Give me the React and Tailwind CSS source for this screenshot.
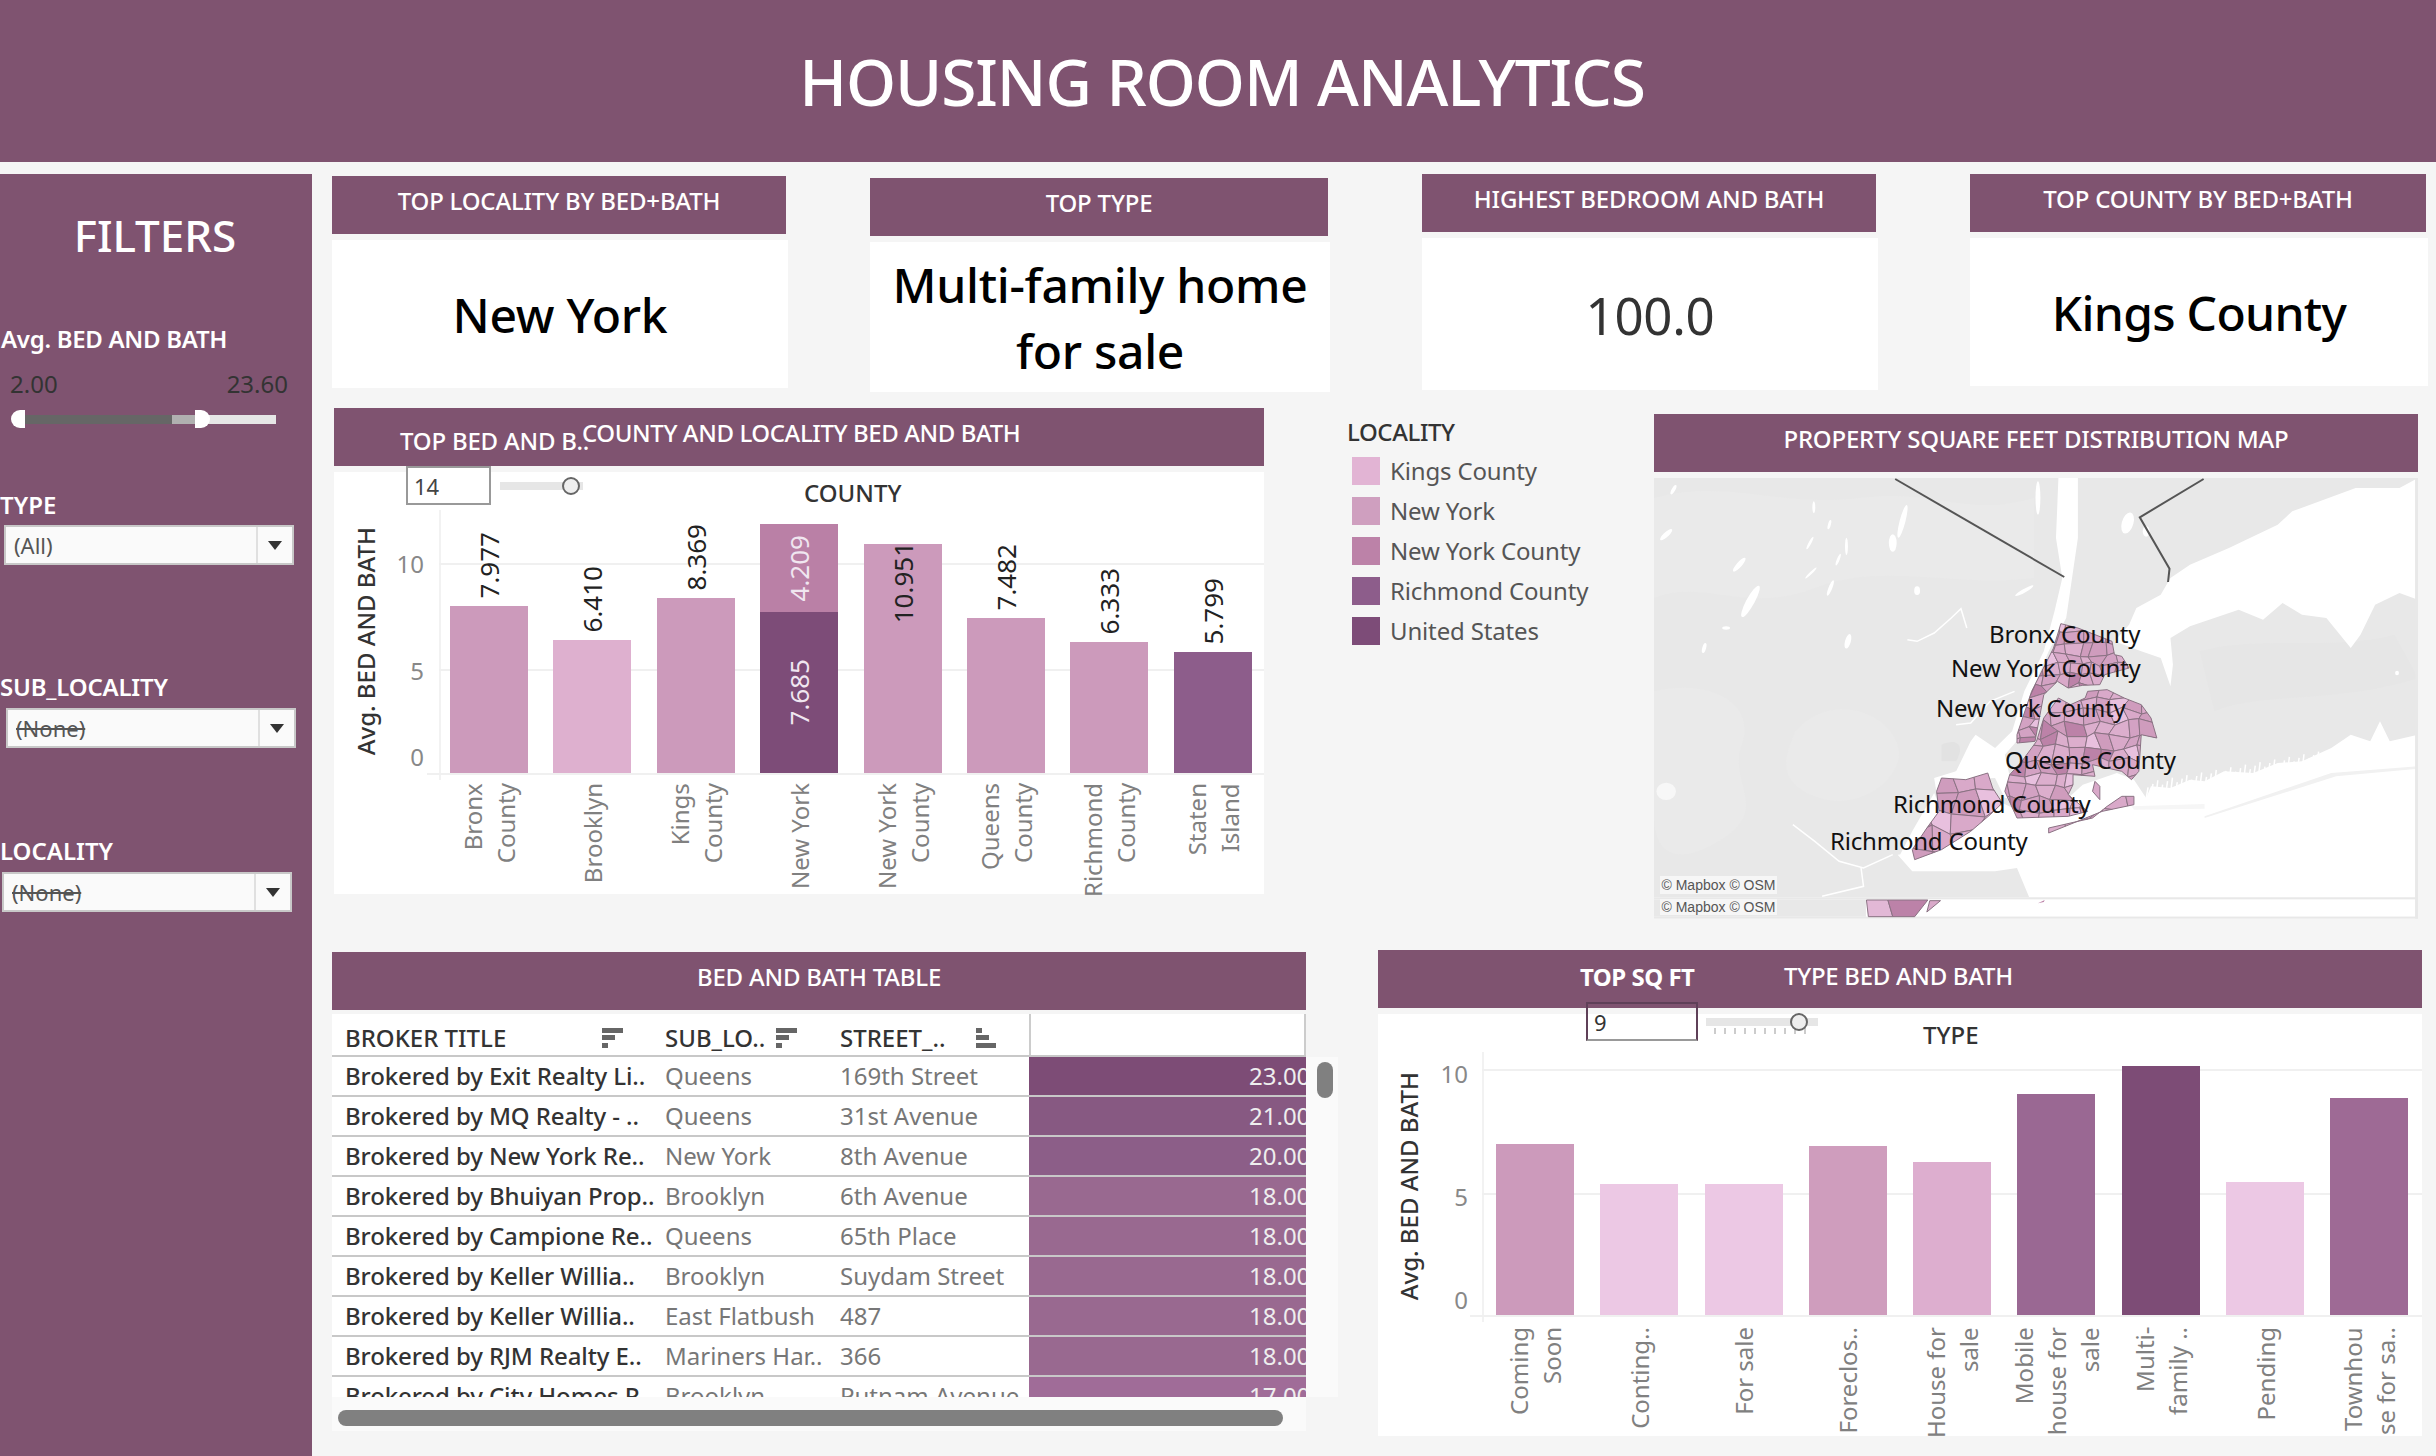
import React from "react";

const F = "font-['Noto_Sans',sans-serif]";

/* ---------- small pieces ---------- */
const Head = ({ children, className }) => (
  <div className={`bg-[#7f5370] text-white flex justify-center h-[58px] w-full text-[24px] leading-[50px] font-medium tracking-[-0.2px] ${className || ""}`}>{children}</div>
);

const Kpi = ({ wrap, head, bodyH, bodyW, children, color }) => (
  <div className={wrap}>
    <Head>{head}</Head>
    <div className={`bg-white flex items-center justify-center text-center text-[48px] leading-[66px] font-medium tracking-[-0.3px] pt-[2px] mt-[6px] ${bodyH} ${bodyW} ${color}`}>{children}</div>
  </div>
);

const Select = ({ wrap, value, strike }) => (
  <div className={`h-[40px] w-[290px] border-2 border-[#c8c8c8] bg-[#fafafa] flex items-center text-[22px] text-[#555] ${wrap}`}>
    <div className={`flex-1 pl-[8px] ${strike ? "line-through" : ""}`}>{value}</div>
    <div className="w-[36px] h-full border-l-2 border-[#e0e0e0] flex items-center justify-center">
      <svg width="16" height="9" viewBox="0 0 16 9"><path d="M1 0h14L8 9z" fill="#333" /></svg>
    </div>
  </div>
);

const VText = ({ children, className }) => (
  <div className={`[writing-mode:vertical-rl] rotate-180 whitespace-nowrap ${className || ""}`}>{children}</div>
);

const Bar = ({ b }) => (
  <div className="relative w-[78px]" style={{ height: b.segs ? b.segs[0].h + b.segs[1].h : b.h }}>
    {b.segs ? (
      b.segs.map((s) => (
        <div key={s.v} className="w-full flex items-center justify-center text-[26px] text-[#f0e6f0]" style={{ height: s.h, background: s.c }}>
          <VText>{s.v}</VText>
        </div>
      ))
    ) : (
      <div className="w-full h-full" style={{ background: b.c }} />
    )}
    {b.v && (
      <VText className={`absolute left-1/2 -translate-x-1/2 text-[26px] text-[#222] ${b.inside ? "top-[-2px]" : "bottom-full mb-[8px]"}`}>{b.v}</VText>
    )}
  </div>
);

const XLabels = ({ data, className }) => (
  <div className={`flex ${className}`}>
    {data.map((b, i) => (
      <div key={i} className="w-[78px] flex justify-center items-start">
        <VText className="text-right text-[24px] leading-[33px] text-[#808080]">
          {b.l.map((t, j) => (
            <React.Fragment key={j}>{t}{j < b.l.length - 1 && <br />}</React.Fragment>
          ))}
        </VText>
      </div>
    ))}
  </div>
);

const SortIcon = ({ flip }) => (
  <svg width="21" height="20" viewBox="0 0 21 20" className="shrink-0">
    {flip ? (
      <g fill="#666"><rect x="0" y="0" width="6" height="5" /><rect x="0" y="7" width="13" height="5" /><rect x="0" y="15" width="20" height="5" /></g>
    ) : (
      <g fill="#666"><rect x="0" y="0" width="21" height="5" /><rect x="0" y="7" width="13" height="5" /><rect x="0" y="15" width="6" height="5" /></g>
    )}
  </svg>
);

/* ---------- data ---------- */
const county = [
  { h: 167, c: "#cc9abb", v: "7.977", l: ["Bronx", "County"] },
  { h: 133, c: "#deb0cf", v: "6.410", l: ["Brooklyn"] },
  { h: 175, c: "#cc9abb", v: "8.369", l: ["Kings", "County"] },
  { segs: [{ h: 88, c: "#ba80a6", v: "4.209" }, { h: 161, c: "#7d4c78", v: "7.685" }], l: ["New York"] },
  { h: 229, c: "#cc9abb", v: "10.951", inside: true, l: ["New York", "County"] },
  { h: 155, c: "#cc9abb", v: "7.482", l: ["Queens", "County"] },
  { h: 131, c: "#cc9abb", v: "6.333", l: ["Richmond", "County"] },
  { h: 121, c: "#8d5d8b", v: "5.799", l: ["Staten", "Island"] },
];
const types = [
  { h: 171, c: "#cc9abb", l: ["Coming", "Soon"] },
  { h: 131, c: "#ecc8e4", l: ["Conting.."] },
  { h: 131, c: "#ecc8e4", l: ["For sale"] },
  { h: 169, c: "#cf9dbd", l: ["Foreclos.."] },
  { h: 153, c: "#ddaecf", l: ["House for", "sale"] },
  { h: 221, c: "#9a6893", l: ["Mobile", "house for", "sale"] },
  { h: 249, c: "#7d4c76", l: ["Multi-", "family .."] },
  { h: 133, c: "#ecc8e4", l: ["Pending"] },
  { h: 217, c: "#9e6a95", l: ["Townhou", "se for sa.."] },
];
const legend = [
  ["#e2b4d4", "Kings County"],
  ["#cf9fbf", "New York"],
  ["#bc82a8", "New York County"],
  ["#8d5d8b", "Richmond County"],
  ["#7d4c78", "United States"],
];
const rows = [
  ["Brokered by Exit Realty Li..", "Queens", "169th Street", "23.00", "#7d4c76"],
  ["Brokered by MQ Realty - ..", "Queens", "31st Avenue", "21.00", "#875982"],
  ["Brokered by New York Re..", "New York", "8th Avenue", "20.00", "#8c5e88"],
  ["Brokered by Bhuiyan Prop..", "Brooklyn", "6th Avenue", "18.00", "#996990"],
  ["Brokered by Campione Re..", "Queens", "65th Place", "18.00", "#996990"],
  ["Brokered by Keller Willia..", "Brooklyn", "Suydam Street", "18.00", "#996990"],
  ["Brokered by Keller Willia..", "East Flatbush", "487", "18.00", "#996990"],
  ["Brokered by RJM Realty E..", "Mariners Har..", "366", "18.00", "#996990"],
  ["Brokered by City Homes R..", "Brooklyn", "Putnam Avenue", "17.00", "#a06c98"],
];

/* ---------- map ---------- */
let seed = 11;
const rnd = () => {
  seed = (seed * 16807) % 2147483647;
  return seed / 2147483647;
};
const pal = ["#d9a9c9", "#d9a9c9", "#dcaecd", "#cf9cbd", "#e8c0de", "#d3a2c3", "#dcaecd", "#bc82a8"];
const mesh = (x0, y0, x1, y1, cw, ch) => {
  const pts = [];
  for (let j = 0; j <= Math.ceil((y1 - y0) / ch); j++) {
    const r = [];
    for (let i = 0; i <= Math.ceil((x1 - x0) / cw); i++) {
      r.push([x0 + i * cw + (rnd() - 0.5) * cw * 0.7, y0 + j * ch + (rnd() - 0.5) * ch * 0.7]);
    }
    pts.push(r);
  }
  const cells = [];
  for (let j = 0; j < pts.length - 1; j++) {
    for (let i = 0; i < pts[j].length - 1; i++) {
      cells.push({
        p: [pts[j][i], pts[j][i + 1], pts[j + 1][i + 1], pts[j + 1][i]].map((q) => q.map((n) => n.toFixed(0)).join(",")).join(" "),
        c: pal[Math.floor(rnd() * pal.length)],
      });
    }
  }
  return cells;
};
const bronx = "835,437 870,450 940,490 945,530 960,535 975,570 925,590 915,620 880,622 850,630 828,610 800,650 782,790 745,795 745,770 775,640 820,510";
const qb = "830,660 855,680 885,660 890,640 930,635 965,660 1000,680 1020,720 1032,780 1000,770 995,880 980,905 960,880 900,860 905,895 860,890 860,920 850,950 890,1000 850,1015 745,1020 720,940 730,890 755,850 785,790 800,720 820,680";
const si = "590,900 640,905 685,885 695,930 715,975 690,1010 650,1060 590,1115 535,1145 530,1115 560,1050 585,1000 580,940";
const rock = "810,1050 900,1020 930,985 960,955 985,955 985,980 920,1000 810,1065";
const isle = "905,910 915,925 915,965 900,940";
const cellsBronx = mesh(730, 430, 990, 800, 24, 32);
const cellsQB = mesh(700, 620, 1040, 1030, 30, 38);
const cellsSI = mesh(520, 880, 720, 1150, 50, 60);
const cellsRock = mesh(800, 950, 990, 1070, 44, 60);

const lakes = [
  [25, 170, 6, 20, 35], [175, 260, 6, 24, 30], [198, 370, 9, 50, 20], [103, 510, 4, 15, 10], [148, 450, 8, 5, 0],
  [322, 285, 3, 20, 35], [362, 330, 4, 24, 15], [398, 490, 6, 22, 10], [540, 338, 6, 13, 0], [510, 130, 6, 50, 10],
  [490, 195, 8, 26, 0], [760, 338, 24, 5, -40], [320, 195, 3, 20, 20], [395, 205, 3, 26, 0], [378, 245, 3, 18, 15],
  [360, 140, 3, 14, 10], [328, 88, 3, 18, 0], [788, 60, 5, 50, 0], [972, 135, 12, 32, 10], [40, 35, 4, 15, 20],
  [1010, 160, 7, 16, 0], [1525, 585, 4, 7, 0],
];
const fringe = [];
for (let i = 0; i < 42; i++) {
  const x = 1010 + i * 10;
  const y = 950 - i * 2.6;
  fringe.push(`${x},${y + 12} ${x + 4},${y - 22 - (i % 3) * 8}`);
}

const st = { vectorEffect: "non-scaling-stroke" };

const MapSvg = () => (
  <svg viewBox="0 0 1568 1335" preserveAspectRatio="none" className="w-[764px] h-[445px] block">
    <defs>
      <clipPath id="cB"><polygon points={bronx} /></clipPath>
      <clipPath id="cQ"><polygon points={qb} /></clipPath>
      <clipPath id="cS"><polygon points={si} /></clipPath>
      <clipPath id="cR"><polygon points={rock} /></clipPath>
    </defs>
    <rect width="1568" height="1260" fill="#e8e8e8" />
    {/* relief */}
    <g fill="#eaeaea">
      <path d="M0 60C150 0 260 90 420 60S640 120 780 60V300C620 330 470 250 330 330S100 300 0 360Z" />
      <path d="M0 640C120 600 210 680 180 800S250 1000 120 1100 0 1010 0 1000Z" />
      <path d="M290 760C360 640 480 700 500 800S420 1000 340 960 260 860 290 760Z" />
    </g>
    <path d="M1120 520C1240 470 1400 520 1520 470L1568 600C1400 680 1240 640 1150 700Z" fill="#e6e6e6" />
    <path d="M590 800C620 780 640 800 620 850L590 850Z" fill="#e2e2e2" />
    {/* water */}
    <g fill="#ffffff">
      <polygon points="1568,0 1530,30 1440,30 1310,100 1280,140 1180,210 1100,260 1060,300 1040,350 990,390 975,440 945,490 1000,520 1040,540 1060,625 1065,560 1060,480 1100,445 1200,395 1250,425 1290,375 1330,410 1380,420 1430,510 1450,470 1480,380 1530,345 1568,365" />
      <polygon points="830,0 870,0 870,180 858,300 846,420 810,520 775,640 750,780 720,830 740,960 720,960 700,900 600,905 620,880 650,790 660,770 700,810 735,760 760,640 800,520 822,400 838,300 825,180" />
      <polygon points="1568,770 1510,790 1490,730 1470,790 1430,770 1390,810 1330,850 1280,855 1230,885 1170,880 1130,910 1100,905 1060,930 1020,925 1010,960 985,905 950,885 880,920 850,960 780,1020 715,975 650,1060 590,1115 500,1130 530,1180 700,1180 745,1170 770,1258 1568,1258" />
      <polygon points="575,900 620,880 640,905 580,945" />
      <polygon points="575,945 590,1000 555,1060 530,1140 505,1130 530,1060" />
    </g>
    <polygon points="1130,1015 1390,885 1568,865 1568,872 1400,895 1130,1020" fill="#f1f1f1" />
    <polygon points="980,985 1130,978 1130,992 985,995" fill="#f6f6f6" />
    <g fill="#ffffff">
      {lakes.map((e, i) => (
        <ellipse key={i} cx={e[0]} cy={e[1]} rx={e[2]} ry={e[3]} transform={`rotate(${e[4]} ${e[0]} ${e[1]})`} />
      ))}
    </g>
    <ellipse cx="25" cy="940" rx="20" ry="26" fill="#f7f7f7" />
    <g fill="none" stroke="#ffffff" strokeWidth="1.5">
      <polyline points="285,1040 330,1090 380,1150 430,1170 490,1130" {...st} />
      <polyline points="425,1170 430,1225 345,1255" {...st} />
      <polyline points="520,485 540,490 575,465 610,420 630,392 642,450" {...st} />
      <polyline points="620,740 650,735 690,670 740,640" {...st} />
      {fringe.map((p, i) => <polyline key={i} points={p} {...st} />)}
    </g>
    {/* state lines */}
    <polyline points="495,3 842,297" fill="none" stroke="#555" strokeWidth="2" {...st} />
    <polyline points="1128,3 997,118 1058,272 1055,312" fill="none" stroke="#555" strokeWidth="2" {...st} />
    {/* boroughs */}
    {[["cB", cellsBronx, bronx], ["cQ", cellsQB, qb], ["cS", cellsSI, si], ["cR", cellsRock, rock]].map(([id, cells, out]) => (
      <g key={id}>
        <g clipPath={`url(#${id})`}>
          {cells.map((c, i) => (
            <polygon key={i} points={c.p} fill={c.c} stroke="#8a7283" strokeWidth="1" {...st} />
          ))}
        </g>
        <polygon points={out} fill="none" stroke="#8a7283" strokeWidth="1" {...st} />
      </g>
    ))}
    <polygon points={isle} fill="#d9a9c9" stroke="#8a7283" strokeWidth="1" {...st} />
    {/* second pane */}
    <rect y="1258" width="1568" height="58" fill="#ffffff" />
    <rect y="1258" width="1568" height="6" fill="#e8e8e8" />
    <rect y="1316" width="1568" height="6" fill="#e8e8e8" />
    <rect y="1322" width="1568" height="13" fill="#f5f5f5" />
    <rect y="1264" width="435" height="52" fill="#e8e8e8" />
    <polygon points="436,1266 480,1266 490,1316 440,1316" fill="#e2b8d6" stroke="#8a7283" strokeWidth="1" {...st} />
    <polygon points="480,1266 562,1266 535,1316 490,1316" fill="#bc82a8" stroke="#8a7283" strokeWidth="1" {...st} />
    <polygon points="566,1268 588,1268 560,1302" fill="#d9a9c9" stroke="#8a7283" strokeWidth="1" {...st} />
    <polygon points="788,1276 802,1266 800,1272" fill="#bc82a8" />
    <rect x="1562" width="6" height="1322" fill="#e8e8e8" />
  </svg>
);

const mapLabels = [
  ["Bronx County", "left-[335px] top-[156px]"],
  ["New York County", "left-[297px] top-[190px]"],
  ["New York County", "left-[282px] top-[230px]"],
  ["Queens County", "left-[351px] top-[282px]"],
  ["Richmond County", "left-[239px] top-[326px]"],
  ["Richmond County", "left-[176px] top-[363px]"],
];

/* ---------- page ---------- */
export default function App() {
  return (
    <div className={`w-[2436px] h-[1456px] overflow-hidden bg-[#f5f5f5] ${F}`}>
      <header className="h-[162px] bg-[#7f5370] flex items-center justify-center text-white text-[64px] leading-none font-medium tracking-[-1.1px] pl-[8px] pt-[1px]">
        HOUSING ROOM ANALYTICS
      </header>

      <div className="flex mt-[12px] h-[1282px]">
        {/* sidebar */}
        <aside className="w-[312px] shrink-0 bg-[#7f5370] text-white overflow-hidden">
          <div className="text-center text-[44px] leading-[56px] font-medium mt-[33px] pr-[2px]">FILTERS</div>
          <div className="text-[24px] leading-[32px] font-semibold tracking-[-0.3px] mt-[60px] pl-[1px]">Avg. BED AND BATH</div>
          <div className="flex justify-between w-[278px] ml-[10px] text-[24px] leading-[32px] text-[#333] mt-[13px]">
            <span>2.00</span><span>23.60</span>
          </div>
          <div className="relative flex ml-[20px] w-[256px] h-[9px] mt-[15px]">
            <div className="w-[152px] bg-[#666]" />
            <div className="w-[23px] bg-[#b0b0b0]" />
            <div className="flex-1 bg-[#e6e6e6]" />
            <div className="absolute left-[-9px] top-[-5px] w-[14px] h-[18px] bg-white rounded-l-full" />
            <div className="absolute left-[175px] top-[-5px] w-[15px] h-[18px] bg-white rounded-r-full" />
          </div>

          <div className="text-[24px] leading-[32px] font-semibold mt-[65px]">TYPE</div>
          <Select wrap="ml-[4px] mt-[4px]" value="(All)" />

          <div className="text-[24px] leading-[32px] font-semibold tracking-[-0.2px] mt-[106px]">SUB_LOCALITY</div>
          <Select wrap="ml-[6px] mt-[5px]" value="(None)" strike />

          <div className="text-[24px] leading-[32px] font-semibold mt-[87px]">LOCALITY</div>
          <Select wrap="ml-[2px] mt-[5px]" value="(None)" strike />
        </aside>

        {/* content */}
        <main className="flex-1 min-w-0">
          {/* KPI row */}
          <div className="flex items-start h-[234px]">
            <Kpi wrap="ml-[20px] mt-[2px] w-[454px]" head="TOP LOCALITY BY BED+BATH" bodyH="h-[148px]" bodyW="w-[456px]" color="text-black">New York</Kpi>
            <Kpi wrap="ml-[84px] mt-[4px] w-[458px]" head="TOP TYPE" bodyH="h-[150px]" bodyW="w-[460px]" color="text-black">Multi-family home<br />for sale</Kpi>
            <Kpi wrap="ml-[94px] w-[454px]" head="HIGHEST BEDROOM AND BATH" bodyH="h-[152px]" bodyW="w-[456px]" color="text-[#333]"><span className="text-[51px] font-normal">100.0</span></Kpi>
            <Kpi wrap="ml-[94px] w-[456px]" head="TOP COUNTY BY BED+BATH" bodyH="h-[148px]" bodyW="w-[458px]" color="text-black"><span className="tracking-[-0.7px]">Kings County</span></Kpi>
          </div>

          {/* middle row */}
          <div className="flex items-start h-[542px]">
            <section className="relative ml-[22px] w-[930px] shrink-0">
              <div className="h-[58px] bg-[#7f5370]" />
              <div className="absolute left-[66px] top-[17px] text-white text-[24px] leading-[32px] font-medium tracking-[-0.2px]">TOP BED AND B..</div>
              <div className="absolute left-[248px] top-[9px] text-white text-[24px] leading-[32px] font-medium tracking-[-0.4px]">COUNTY AND LOCALITY BED AND BATH</div>
              <div className="relative mt-[6px] h-[422px] bg-white">
                <div className="absolute left-[72px] top-[-6px] w-[85px] h-[39px] border-2 border-[#999] bg-white text-[22px] leading-[36px] pl-[6px] text-[#444]">14</div>
                <div className="absolute left-[166px] top-[10px] w-[83px] h-[8px] bg-[#e6e6e6]" />
                <div className="absolute left-[228px] top-[5px] w-[18px] h-[18px] rounded-full border-2 border-[#666] bg-[#eee]" />
                <div className="absolute left-[470px] top-[5px] text-[24px] leading-[32px] text-[#333] font-medium">COUNTY</div>
                <VText className="absolute left-[16px] top-[55px] text-[24px] leading-[32px] font-medium text-[#333]">Avg. BED AND BATH</VText>
                <div className="absolute right-[840px] top-[76px] text-[24px] leading-[32px] text-[#888]">10</div>
                <div className="absolute right-[840px] top-[183px] text-[24px] leading-[32px] text-[#888]">5</div>
                <div className="absolute right-[840px] top-[269px] text-[24px] leading-[32px] text-[#888]">0</div>
                <div className="absolute left-[105px] top-[38px] w-[2px] h-[270px] bg-[#f2f2f2]" />
                <div className="absolute left-[105px] right-0 top-[91px] h-[2px] bg-[#f0f0f0]" />
                <div className="absolute left-[105px] right-0 top-[197px] h-[2px] bg-[#f0f0f0]" />
                <div className="absolute left-[93px] right-0 top-[301px] h-[2px] bg-[#f0f0f0]" />
                <div className="relative pt-[41px] pl-[116px]">
                  <div className="flex items-end gap-[25.4px] h-[260px]">
                    {county.map((b, i) => <Bar key={i} b={b} />)}
                  </div>
                  <XLabels data={county} className="gap-[25.4px] mt-[10px]" />
                </div>
              </div>
            </section>

            <section className="ml-[83px] w-[307px] shrink-0 mt-[8px]">
              <div className="text-[24px] leading-[32px] text-[#333] font-medium tracking-[-0.4px]">LOCALITY</div>
              <div className="mt-[8px] ml-[5px] flex flex-col gap-[12px]">
                {legend.map(([c, t]) => (
                  <div key={t} className="flex items-center gap-[10px] h-[28px] text-[24px] leading-[30px] pt-[1px] text-[#555] whitespace-nowrap tracking-[-0.15px]">
                    <div className="w-[28px] h-[28px]" style={{ background: c }} />
                    {t}
                  </div>
                ))}
              </div>
            </section>

            <section className="w-[764px] shrink-0 mt-[6px]">
              <Head>PROPERTY SQUARE FEET DISTRIBUTION MAP</Head>
              <div className="relative mt-[6px]">
                <MapSvg />
                {mapLabels.map(([t, pos], i) => (
                  <div key={i} className={`absolute -translate-y-1/2 whitespace-nowrap text-[24px] tracking-[-0.2px] text-[#111] ${pos}`}>{t}</div>
                ))}
                <div className="absolute left-[6px] top-[398px] h-[18px] w-[117px] bg-[#f6f6f6] font-['Liberation_Sans',sans-serif] text-[14px] leading-[18px] text-[#555] text-center">© Mapbox © OSM</div>
                <div className="absolute left-[6px] top-[421px] h-[16px] w-[117px] bg-[#f6f6f6] font-['Liberation_Sans',sans-serif] text-[14px] leading-[16px] text-[#555] text-center">© Mapbox © OSM</div>
              </div>
            </section>
          </div>

          {/* bottom row */}
          <div className="flex items-start">
            <section className="relative ml-[20px] w-[974px] shrink-0 mt-[2px]">
              <Head>BED AND BATH TABLE</Head>
              <div className="mt-[4px] bg-white">
                <div className="flex h-[43px] items-center border-b-2 border-[#c8c8c8] text-[24px] leading-[30px] text-[#333] font-medium">
                  <div className="w-[333px] pl-[13px] pr-[42px] pt-[6px] flex items-center justify-between"><span>BROKER TITLE</span><SortIcon /></div>
                  <div className="w-[175px] pr-[43px] pt-[6px] flex items-center justify-between"><span>SUB_LO..</span><SortIcon /></div>
                  <div className="w-[189px] pr-[32px] pt-[6px] h-full flex items-center justify-between"><span>STREET_..</span><SortIcon flip /></div>
                  <div className="flex-1 h-full border-l-2 border-r-2 border-[#ccc]" />
                </div>
                <div className="h-[340px] overflow-hidden">
                  {rows.map((r, i) => (
                    <div key={i} className="flex h-[40px] border-b-2 border-[#c8c8c8] text-[24px] leading-[38px] whitespace-nowrap">
                      <div className="w-[333px] pl-[13px] text-[#333] font-medium tracking-[-0.1px]">{r[0]}</div>
                      <div className="w-[175px] text-[#777]">{r[1]}</div>
                      <div className="w-[189px] text-[#777]">{r[2]}</div>
                      <div className="flex-1 overflow-hidden pl-[220px] text-[#eee]" style={{ background: r[4] }}>{r[3]}</div>
                    </div>
                  ))}
                </div>
                <div className="h-[34px] bg-[#fafafa] pt-[13px] pl-[6px]">
                  <div className="w-[945px] h-[16px] rounded-full bg-[#808080]" />
                </div>
              </div>
              <div className="absolute left-[974px] top-[105px] w-[32px] h-[340px] bg-[#fafafa]">
                <div className="ml-[11px] mt-[5px] w-[16px] h-[36px] rounded-full bg-[#808080]" />
              </div>
            </section>

            <section className="relative ml-[72px] w-[1044px] shrink-0">
              <div className="h-[58px] bg-[#7f5370]" />
              <div className="absolute left-[202px] top-[11px] text-white text-[24px] leading-[32px] font-bold tracking-[-0.5px]">TOP SQ FT</div>
              <div className="absolute left-[406px] top-[10px] text-white text-[24px] leading-[32px] font-medium tracking-[-0.3px]">TYPE BED AND BATH</div>
              <div className="relative mt-[6px] h-[422px] bg-white">
                <div className="absolute left-[208px] top-[-12px] w-[112px] h-[39px] border-2 border-[#5f4058] border-b-[#999] text-[22px] leading-[36px] pl-[6px] text-[#333]">9</div>
                <div className="absolute left-[328px] top-[4px] w-[112px] h-[8px] bg-[#e6e6e6]" />
                <div className="absolute left-[336px] top-[14px] flex gap-[8px]">
                  {[...Array(10)].map((_, i) => <div key={i} className="w-[2px] h-[6px] bg-[#ccc]" />)}
                </div>
                <div className="absolute left-[412px] top-[-1px] w-[18px] h-[18px] rounded-full border-2 border-[#666] bg-[#eee]" />
                <div className="absolute left-[545px] top-[5px] text-[24px] leading-[32px] text-[#333] font-medium">TYPE</div>
                <VText className="absolute left-[15px] top-[58px] text-[24px] leading-[32px] font-medium text-[#333]">Avg. BED AND BATH</VText>
                <div className="absolute right-[954px] top-[44px] text-[24px] leading-[32px] text-[#888]">10</div>
                <div className="absolute right-[954px] top-[167px] text-[24px] leading-[32px] text-[#888]">5</div>
                <div className="absolute right-[954px] top-[270px] text-[24px] leading-[32px] text-[#888]">0</div>
                <div className="absolute left-[104px] top-[38px] w-[2px] h-[270px] bg-[#f2f2f2]" />
                <div className="absolute left-[104px] right-0 top-[55px] h-[2px] bg-[#f0f0f0]" />
                <div className="absolute left-[104px] right-0 top-[179px] h-[2px] bg-[#f0f0f0]" />
                <div className="absolute left-[92px] right-0 top-[301px] h-[2px] bg-[#f0f0f0]" />
                <div className="relative pt-[41px] pl-[118px]">
                  <div className="flex items-end gap-[26.3px] h-[260px]">
                    {types.map((b, i) => <Bar key={i} b={b} />)}
                  </div>
                  <XLabels data={types} className="gap-[26.3px] mt-[12px]" />
                </div>
              </div>
            </section>
          </div>
        </main>
      </div>
    </div>
  );
}
